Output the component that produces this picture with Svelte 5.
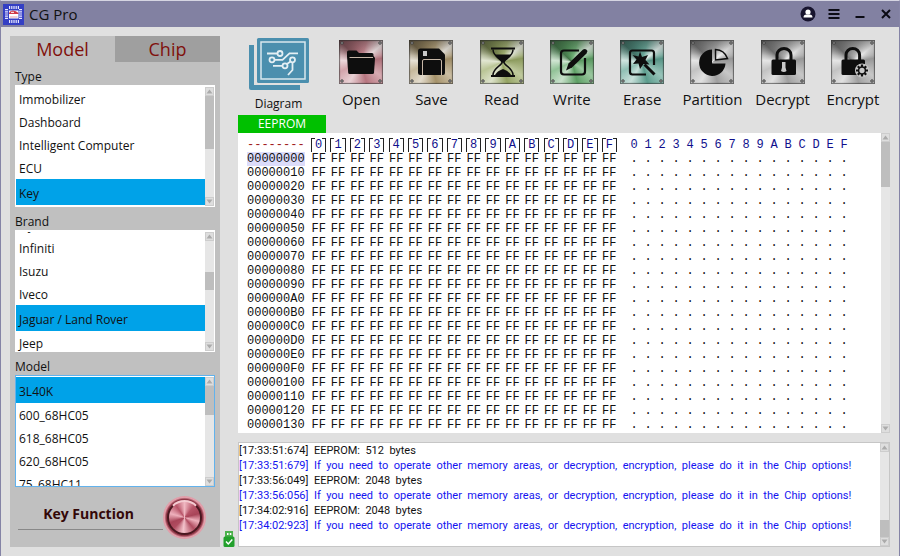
<script lang="ts">
  type Tool = { name: string; tint: string };

  const tools: Tool[] = [
    { name: "Open", tint: "#c07c86" },
    { name: "Save", tint: "#ae9a70" },
    { name: "Read", tint: "#9cac68" },
    { name: "Write", tint: "#62a86a" },
    { name: "Erase", tint: "#60a494" },
    { name: "Partition", tint: "#a8a8a8" },
    { name: "Decrypt", tint: "#a8a8a8" },
    { name: "Encrypt", tint: "#a8a8a8" },
  ];

  const groups = [
    {
      label: "Type",
      items: ["Immobilizer", "Dashboard", "Intelligent Computer", "ECU", "Key"],
      scroll: 0,
      thumb: [0, 52],
    },
    {
      label: "Brand",
      items: ["Hyundai", "Infiniti", "Isuzu", "Iveco", "Jaguar / Land Rover", "Jeep", "Kia"],
      scroll: 19,
      thumb: [31, 18],
    },
    {
      label: "Model",
      items: ["3L40K", "600_68HC05", "618_68HC05", "620_68HC05", "75_68HC11"],
      scroll: 0,
      thumb: [0, 32],
    },
  ];

  const digits = [..."0123456789ABCDEF"];
  const addresses = Array.from({ length: 20 }, (_, i) =>
    (i * 16).toString(16).toUpperCase().padStart(8, "0")
  );

  const hint =
    "If you need to operate other memory areas, or decryption, encryption, please do it in the Chip options!";
  const log = [
    { time: "17:33:51:674", text: "EEPROM: 512 bytes", info: false },
    { time: "17:33:51:679", text: hint, info: true },
    { time: "17:33:56:049", text: "EEPROM: 2048 bytes", info: false },
    { time: "17:33:56:056", text: hint, info: true },
    { time: "17:34:02:916", text: "EEPROM: 2048 bytes", info: false },
    { time: "17:34:02:923", text: hint, info: true },
  ];

  let tab = $state("Model");
  let selected: Record<string, string> = $state({
    Type: "Key",
    Brand: "Jaguar / Land Rover",
    Model: "3L40K",
  });

  // the log uses double-width gaps between words
  const spaced = (s: string) => s.replaceAll(" ", "  ");

  function startAt(node: HTMLElement, offset: number) {
    node.scrollTop = offset;
  }
</script>

{#snippet scrollbar(start: number, size: number)}
  <div class="scrollbar" aria-hidden="true">
    <svg class="arrow" viewBox="0 0 9 9"><path d="M1.5 6.5 4.5 2.5 7.5 6.5z" /></svg>
    <div class="track">
      <div class="thumb" style="top: {start}%; height: {size}%"></div>
    </div>
    <svg class="arrow" viewBox="0 0 9 9"><path d="M1.5 2.5 4.5 6.5 7.5 2.5z" /></svg>
  </div>
{/snippet}

{#snippet glyph(name: string)}
  <svg viewBox="0 0 44 44" aria-hidden="true">
    <g class="screws">
      <circle cx="3" cy="3" r="1.200" />
      <circle cx="41" cy="3" r="1.200" />
      <circle cx="3" cy="41" r="1.200" />
      <circle cx="41" cy="41" r="1.200" />
    </g>
    {#if name === "Open"}
      <path d="M8 12q0-1.500 1.500-1.500h8l2.500 2.500h13q1.500 0 1.500 1.500v2H8z" />
      <path d="M8 16h26.500l1.500 2-1 15q-.2 1-1.500 1H10.500q-1.200 0-1.300-1.200z" />
      <path class="edge" d="M10.500 17.500h23.500" />
    {:else if name === "Save"}
      <path d="M11.500 8.500H30L36 14.500V33q0 2-2 2H11.500q-2.500 0-2.500-2.500V11q0-2.500 2.500-2.500z" />
      <rect class="light" x="14" y="11" width="4" height="5" />
      <path class="edge" d="M13.500 35V21q0-1.500 1.500-1.500h16q1.500 0 1.500 1.500V35" />
    {:else if name === "Read"}
      <path d="M11 7.500h24v2H11zM11 35h24v2H11z" />
      <path class="line" d="M13 9.500C13 17 22 19 22 22.200S13 28 13 35M33 9.500C33 17 24 19 24 22.200S33 28 33 35" />
      <path d="M15 14.500h16q-2 4-6 6l-2 3-2-3q-4-2-6-6zM15 35q2-4 8-6 6 2 8 6z" />
    {:else if name === "Write"}
      <path class="line thick" d="M29 10.500H14q-3 0-3 3v18q0 3 3 3h18q3 0 3-3V18" />
      <path d="M16 30.500 18.500 23.500 33 9.500q3-1.500 4.500 1.500l-1 2.500L22 27.500z" />
    {:else if name === "Erase"}
      <path class="line thick" d="M34 25V13q0-2.500-2.500-2.500H12.500Q10 10.500 10 13v19q0 2.500 2.500 2.500H26" />
      <path d="M20 11.500 22 17l6-2-2.500 5 4 4.500-6-.5L20 29l-1.500-5.500-5.500.5 3.500-4.500-4-4.500 6 1.500z" />
      <path class="line wand" d="M24.500 24.500 34.500 34.500" />
    {:else if name === "Partition"}
      <path d="M22 9.500A13.200 13.200 0 1 0 35.500 23.500H22z" />
      <path class="line" d="M25.500 20V9.500Q34.500 10 37.500 18.500z" />
    {:else if name === "Decrypt"}
      <path class="line shackle" d="M16 20v-5a7 6.500 0 0 1 14 0v5" />
      <rect x="10.500" y="19.500" width="24.500" height="15.500" rx="1.500" />
      <path class="light" d="M21 22h3.500v5.500l1 3.500q-2.500 2-5.500 0l1-3.500z" />
    {:else}
      <path class="line shackle" d="M15 20v-5a6.800 6.500 0 0 1 13.600 0v5" />
      <rect x="10.500" y="19.500" width="23.500" height="15.500" rx="1.500" />
      <circle class="light" cx="31" cy="30.500" r="7" />
      <circle class="line" cx="31" cy="30.500" r="3.400" />
      <path class="line thick" d="M31 27v-2.500M31 34v2.500M27.500 30.500H25M34.500 30.500H37M28.500 28l-1.700-1.700M33.500 33l1.700 1.700M33.500 28l1.700-1.700M28.500 33l-1.700 1.700" />
    {/if}
  </svg>
{/snippet}

<div class="window">
  <header class="titlebar">
    <svg class="logo" viewBox="0 0 21 21" aria-hidden="true">
      <rect width="21" height="21" fill="#343fc4" />
      <path d="M6 3.500h10M6 17.500h10" stroke="#e8e8ff" stroke-width="3" stroke-dasharray="1.200 1" />
      <path d="M3.500 5v11M17.500 5v11" stroke="#e8e8ff" stroke-width="3" stroke-dasharray="1.200 1" />
      <rect x="6" y="6.500" width="9.500" height="8" fill="#fff" />
      <path d="M6 9q1-2.500 4-2.500t5.500 2.500v1H6z" fill="#cf3a48" />
      <path d="M8 8.300h3" stroke="#fff" />
      <path d="M7 13h7.500" stroke="#e29ca8" />
    </svg>
    <h1>CG Pro</h1>
    <nav>
      <button type="button" aria-label="Account">
        <svg viewBox="0 0 16 16">
          <circle cx="8" cy="8" r="7.500" fill="#17142e" />
          <circle cx="8" cy="6" r="2.600" fill="#fff" />
          <path d="M3.500 11.500q0-3 3-3h3q3 0 3 3z" fill="#fff" />
        </svg>
      </button>
      <button type="button" aria-label="Menu">
        <svg viewBox="0 0 16 16"><path d="M2.500 4h11M2.500 8h11M2.500 12h11" /></svg>
      </button>
      <button type="button" aria-label="Minimize">
        <svg viewBox="0 0 16 16"><path d="M3.500 11h9" /></svg>
      </button>
      <button type="button" aria-label="Close">
        <svg viewBox="0 0 16 16"><path d="M4 4l8 8M12 4l-8 8" /></svg>
      </button>
    </nav>
  </header>

  <div class="body">
    <aside>
      <div class="tabs">
        {#each ["Model", "Chip"] as name}
          <button type="button" class:active={tab === name} onclick={() => (tab = name)}>{name}</button>
        {/each}
      </div>

      {#each groups as group}
        <h2>{group.label}</h2>
        <div class="list" class:focused={group.label === "Model"}>
          <ul use:startAt={group.scroll}>
            {#each group.items as item}
              <li>
                <button
                  type="button"
                  class:selected={selected[group.label] === item}
                  onclick={() => (selected[group.label] = item)}
                >
                  {item}
                </button>
              </li>
            {/each}
          </ul>
          {@render scrollbar(group.thumb[0], group.thumb[1])}
        </div>
      {/each}

      <div class="key-function">
        <label for="key-function">Key Function</label>
        <button type="button" id="key-function" class="knob"><span></span></button>
      </div>
    </aside>

    <div class="status">
      <svg viewBox="0 0 12 16" aria-label="USB connected" role="img">
        <rect x="2" y="0" width="8" height="6" fill="#4bb14b" />
        <path d="M4 2h1.500v2H4zM6.800 2h1.500v2H6.800z" fill="#fff" />
        <rect x="0.500" y="5.500" width="11" height="10.500" rx="1.500" fill="#22a02c" />
        <path d="M3 10.500 5.300 13 9.300 8.500" fill="none" stroke="#fff" stroke-width="1.500" />
      </svg>
    </div>

    <main>
      <div class="toolbar">
        <button type="button" class="diagram">
          <svg viewBox="0 0 60 52" aria-hidden="true">
            <path d="M0 7h5v40h46v5H2q-2 0-2-2z" fill="#4b8fae" />
            <rect x="8" y="0" width="52" height="45" rx="1.500" fill="#4b8fae" />
            <rect x="12" y="4" width="44" height="37" fill="none" stroke="#d9e8ee" stroke-width="1.500" />
            <g fill="none" stroke="#e4eff4" stroke-width="1.800">
              <circle cx="31" cy="15.500" r="2.500" />
              <circle cx="23" cy="21.800" r="2.500" />
              <circle cx="43.500" cy="21.800" r="2.500" />
              <circle cx="36" cy="27.800" r="2.500" />
              <path d="M18 15.500h10.500M25.500 21.800h8l7-6.500h8.500M24 27.800h9.500M38 26l3.500-2.500M43.500 24.500V32l-4.500 5" />
            </g>
          </svg>
          Diagram
        </button>
        {#each tools as tool}
          <button type="button" class="tool">
            <span class="plate" style="--tint: {tool.tint}">{@render glyph(tool.name)}</span>
            {tool.name}
          </button>
        {/each}
      </div>

      <button type="button" class="memory-tab">EEPROM</button>

      <section class="hex">
        <div class="dump">
          <table>
            <colgroup>
              <col class="col-address" />
              {#each digits as _}<col />{/each}
              <col class="col-gap" />
              {#each digits as _}<col class="col-ascii" />{/each}
            </colgroup>
            <thead>
              <tr>
                <th class="dashes">--------</th>
                {#each digits as digit}<th class="bracket"><span>{digit}</span></th>{/each}
                <td></td>
                {#each digits as digit}<th>{digit}</th>{/each}
              </tr>
            </thead>
            <tbody>
              {#each addresses as address, row}
                <tr>
                  <th class="address" class:current={row === 0}>{address}</th>
                  {#each digits as _}<td>FF</td>{/each}
                  <td></td>
                  {#each digits as _}<td>.</td>{/each}
                </tr>
              {/each}
            </tbody>
          </table>
        </div>
        {@render scrollbar(0, 16)}
      </section>

      <section class="log">
        <div class="lines">
          {#each log as line}
            <p class:info={line.info}>{spaced(`[${line.time}] ${line.text}`)}</p>
          {/each}
        </div>
        {@render scrollbar(80, 20)}
      </section>
    </main>
  </div>
</div>

<style>
  :global(body) {
    margin: 0;
  }

  .window {
    box-sizing: border-box;
    min-height: 100vh;
    display: flex;
    flex-direction: column;
    border: 1px solid #8584a6;
    border-top-color: #d5d5e2;
    border-bottom: 0;
    background: #e0e0e0;
    color: #111;
    font: 12px/19px "Open Sans", "Noto Sans", sans-serif;
  }

  h1,
  h2,
  p,
  ul {
    margin: 0;
    padding: 0;
    font-weight: 400;
  }

  button {
    margin: 0;
    padding: 0;
    border: 0;
    background: none;
    color: inherit;
    font: inherit;
    cursor: pointer;
  }

  svg {
    display: block;
  }

  .titlebar {
    display: flex;
    align-items: center;
    gap: 5px;
    height: 26px;
    padding: 0 5px 0 2px;
    background: #8281a2;
  }

  .logo {
    width: 21px;
    height: 21px;
  }

  h1 {
    flex: 1;
    font-size: 15px;
  }

  nav {
    display: flex;
    gap: 10px;
  }

  nav svg {
    width: 16px;
    height: 16px;
    fill: none;
    stroke: #0b0b14;
    stroke-width: 2;
  }

  nav circle,
  nav button:first-child path {
    stroke: none;
  }

  .body {
    flex: 1;
    display: flex;
    padding: 9px;
  }

  aside {
    flex: none;
    width: 210px;
    display: flex;
    flex-direction: column;
    background: #c0c0c0;
  }

  .tabs {
    display: grid;
    grid-template-columns: 1fr 1fr;
  }

  .tabs button {
    height: 26px;
    background: #9f9f9f;
    color: #80100c;
    font-size: 18px;
  }

  .tabs .active {
    background: none;
  }

  h2 {
    padding: 6px 5px 0;
    font-size: 12px;
    line-height: 17px;
  }

  .list {
    box-sizing: border-box;
    height: 122px;
    margin: 0 5px;
    padding-top: 1px;
    display: flex;
    border: 1px solid #fff;
    background: #fff;
  }

  .list.focused {
    height: 112px;
    border-color: #62b2ec;
  }

  .list ul {
    flex: 1;
    overflow: hidden;
    list-style: none;
  }

  .list li button {
    display: block;
    width: 100%;
    height: 23px;
    padding: 2px 3px 0;
    line-height: 19px;
    text-align: left;
  }

  .list li .selected {
    height: 26px;
    background: #00a2e8;
  }

  .scrollbar {
    flex: none;
    width: 9px;
    display: flex;
    flex-direction: column;
    background: #e6e6e6;
  }

  .arrow {
    width: 9px;
    height: 9px;
    background: #dedede;
    outline: 1px solid #cdcdcd;
    outline-offset: -1px;
    fill: #ababab;
  }

  .track {
    flex: 1;
    position: relative;
  }

  .thumb {
    position: absolute;
    left: 0;
    right: 0;
    background: #bebebe;
  }

  .key-function {
    flex: 1;
    display: flex;
    align-items: center;
    padding: 0 14px 0 8px;
  }

  .key-function label {
    flex: 1;
    padding: 0 4px 6px 0;
    border-bottom: 1px solid #888;
    color: #330808;
    font-size: 14px;
    font-weight: 700;
    text-align: center;
  }

  .knob {
    width: 43px;
    height: 43px;
    padding: 4px;
    border-radius: 50%;
    background: radial-gradient(circle, #903848 60%, #e4a0ac 66%, #c87886);
  }

  .knob span {
    display: block;
    box-sizing: border-box;
    height: 35px;
    border: 2px solid #4a1820;
    border-top-color: #f4ccd2;
    border-radius: 50%;
    background: conic-gradient(#f0b8c2, #b85468 40deg, #a84458 75deg, #eeb0bc 105deg, #b04c60 140deg, #f4c4cc 185deg, #b04c60 225deg, #a84458 250deg, #eeb0bc 285deg, #b85468 325deg, #f0b8c2);
  }

  .status {
    flex: none;
    width: 18px;
    display: flex;
    align-items: flex-end;
    justify-content: center;
  }

  .status svg {
    width: 12px;
    height: 16px;
  }

  main {
    flex: 1;
    min-width: 0;
    display: flex;
    flex-direction: column;
  }

  .toolbar {
    display: flex;
    height: 79px;
    font-size: 15px;
  }

  .toolbar button {
    display: flex;
    flex-direction: column;
    align-items: center;
  }

  .toolbar .diagram {
    width: 81px;
    margin-right: 7px;
    padding-top: 2px;
    gap: 4px;
    font-size: 12px;
  }

  .diagram svg {
    width: 60px;
    height: 52px;
  }

  .toolbar .tool {
    flex: 1;
    min-width: 0;
    padding-top: 4px;
    gap: 6px;
  }

  .tool:last-child {
    margin-right: 2px;
  }

  .plate {
    width: 44px;
    height: 44px;
    box-shadow: inset 0 0 1px 1px rgba(40, 40, 40, 0.6);
    background:
      linear-gradient(to bottom, rgba(0, 0, 0, 0.3), transparent 35%),
      conic-gradient(
        from 15deg at 50% 50%,
        rgba(255, 255, 255, 0.1),
        rgba(255, 255, 255, 0.8) 35deg,
        rgba(0, 0, 0, 0.1) 65deg,
        rgba(255, 255, 255, 0.35) 110deg,
        rgba(0, 0, 0, 0.05) 150deg,
        rgba(255, 255, 255, 0.65) 195deg,
        rgba(255, 255, 255, 0.3) 230deg,
        rgba(255, 255, 255, 0.7) 260deg,
        rgba(0, 0, 0, 0.3) 300deg,
        rgba(0, 0, 0, 0.1) 330deg,
        rgba(255, 255, 255, 0.1)
      ),
      var(--tint);
  }

  .plate svg {
    width: 44px;
    height: 44px;
    fill: #0e0e0e;
  }

  .plate .screws {
    fill: #ddd;
    stroke: #333;
    stroke-width: 1;
  }

  .plate .line {
    fill: none;
    stroke: #0e0e0e;
    stroke-width: 1.5;
  }

  .plate .thick {
    stroke-width: 2.2;
  }

  .plate .shackle,
  .plate .wand {
    stroke-width: 3;
  }

  .plate .edge {
    fill: none;
    stroke: #c8b8a8;
    stroke-width: 1;
  }

  .plate .light {
    fill: #c8c8c8;
  }

  .memory-tab {
    width: 88px;
    height: 18px;
    background: #00c000;
    color: #fff;
    font-size: 12px;
    line-height: 18px;
  }

  .hex {
    display: flex;
    background: #fff;
  }

  .dump {
    flex: 1;
    min-width: 0;
    overflow: hidden;
    padding: 5px 0 1px 9px;
  }

  table {
    width: 604px;
    table-layout: fixed;
    border-collapse: collapse;
    font: 12px/14px "Liberation Mono", monospace;
  }

  th,
  td {
    padding: 0;
    font-weight: 400;
    text-align: center;
  }

  thead th {
    color: #10108c;
  }

  .col-address {
    width: 62px;
  }

  .col-gap {
    width: 8px;
  }

  .col-ascii {
    width: 14px;
  }

  th.dashes,
  .address {
    text-align: left;
  }

  th.dashes {
    color: #a02020;
  }

  .address.current {
    background: linear-gradient(to right, #dcdcfa 58px, transparent 58px);
  }

  .bracket span {
    display: flex;
    justify-content: center;
    height: 14px;
  }

  .bracket span::before,
  .bracket span::after {
    content: "";
    width: 3px;
    border: 1px solid #222;
    border-bottom: 0;
  }

  .bracket span::before {
    border-right: 0;
  }

  .bracket span::after {
    border-left: 0;
  }

  .log {
    flex: 1;
    display: flex;
    margin-top: 9px;
    border: 1px solid #c6c6c6;
    background: #fff;
  }

  .lines {
    flex: 1;
    min-width: 0;
    overflow: hidden;
    font-family: Roboto, "Open Sans", sans-serif;
    font-size: 11px;
    line-height: 15px;
    white-space: pre;
  }

  .lines .info {
    color: #1414f0;
  }
</style>
